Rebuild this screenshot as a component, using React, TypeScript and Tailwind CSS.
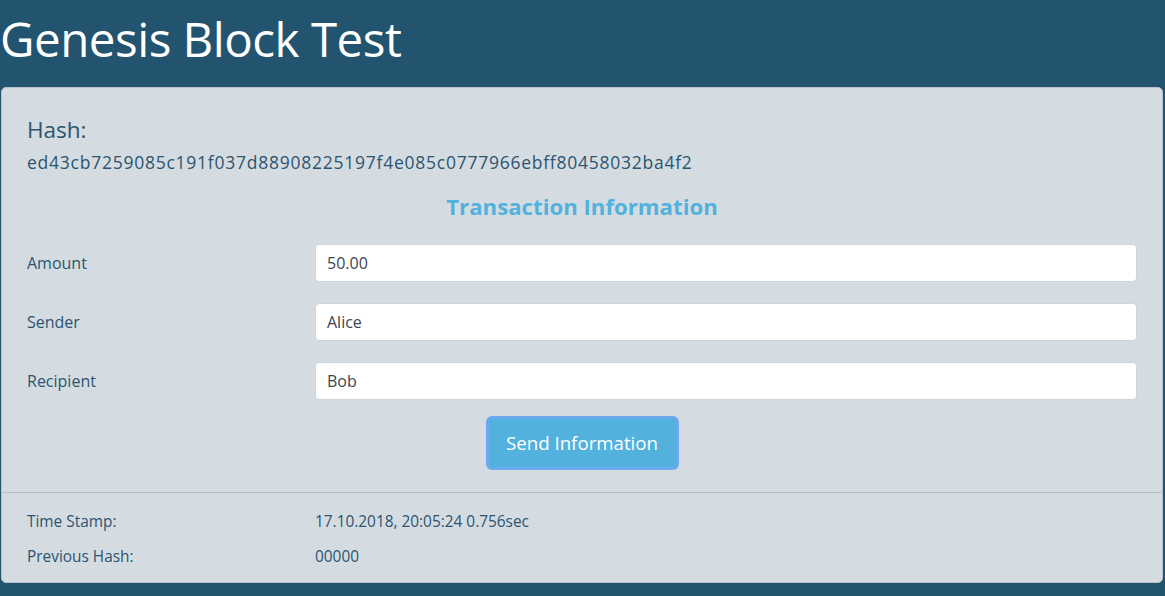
import React from "react";

const font = { fontFamily: '"Open Sans", "Noto Sans", sans-serif' };

function Row({ label, value }: { label: string; value: string }) {
  return (
    <div className="flex items-center h-[38px]">
      <div className="w-[288px] text-[16px] text-[#2c5470]">{label}</div>
      <div className="flex-1 h-[38px] bg-white border border-[#cdd4da] rounded-[4px] flex items-center px-[11px] text-[16px] text-[#3a4650]">
        {value}
      </div>
    </div>
  );
}

export default function App() {
  return (
    <div className="min-h-[596px] bg-[#22536f] pb-[14px]" style={font}>
      <h1 className="text-white text-[47.5px] leading-[78px] h-[87px] tracking-[-0.5px]">Genesis Block Test</h1>
      <div className="mx-[1px] w-[1162px] bg-[#d4dce2] border border-[#b9c3cb] rounded-[5px]">
        <div className="px-[25px] pt-[26px] pb-[22px]">
          <div className="text-[22.5px] text-[#2c5470] leading-[31px]">Hash:</div>
          <div className="text-[17.5px] text-[#2c5470] leading-[24px] mt-[5px] tracking-[0.75px]">ed43cb7259085c191f037d88908225197f4e085c0777966ebff80458032ba4f2</div>
          <div className="text-center text-[22.2px] font-bold text-[#52b1dd] leading-[30px] mt-[18px]">Transaction Information</div>
          <div className="flex flex-col gap-[21px] mt-[22px]">
            <Row label="Amount" value="50.00" />
            <Row label="Sender" value="Alice" />
            <Row label="Recipient" value="Bob" />
          </div>
          <div className="flex justify-center mt-[16px]">
            <button className="w-[193px] h-[54px] bg-[#52b1dd] text-white text-[18.7px] rounded-[6px] border-[3px] border-[#6baaef]">
              Send Information
            </button>
          </div>
        </div>
        <div className="border-t border-[#b6bfc7] px-[25px] pt-[17px] pb-[13px] text-[15.4px] text-[#2c5470]">
          <div className="flex h-[24px] items-center">
            <div className="w-[288px]">Time Stamp:</div>
            <div>17.10.2018, 20:05:24 0.756sec</div>
          </div>
          <div className="flex h-[24px] items-center mt-[11px]">
            <div className="w-[288px]">Previous Hash:</div>
            <div>00000</div>
          </div>
        </div>
      </div>
    </div>
  );
}
